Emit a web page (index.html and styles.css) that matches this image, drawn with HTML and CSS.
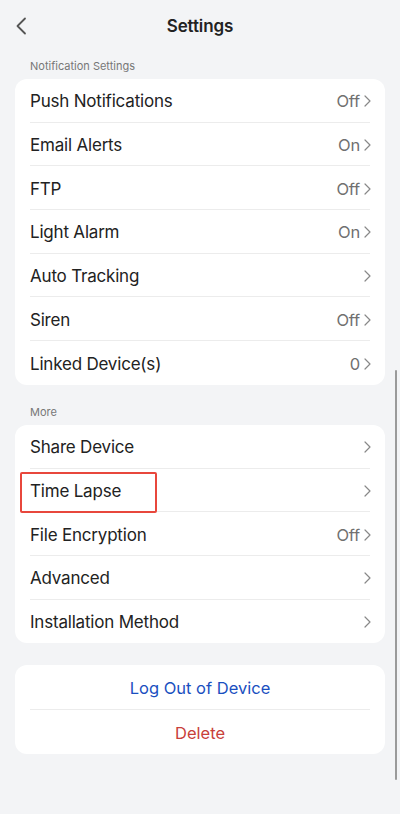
FILE: index.html
```html
<!DOCTYPE html>
<html>
<head>
<meta charset="utf-8">
<link rel="stylesheet" href="styles.css">
</head>
<body>
<div class="page">
  <header class="topbar">
    <svg class="back" width="12" height="18" viewBox="0 0 12 18"><path d="M10 1.5 L2.5 9 L10 16.5" fill="none" stroke="#555" stroke-width="1.8" stroke-linecap="round" stroke-linejoin="round"/></svg>
    <h1 class="title">Settings</h1>
  </header>

  <div class="section-label">Notification Settings</div>
  <div class="card">
    <div class="row"><span class="label">Push Notifications</span><span class="value">Off</span><svg class="chev" viewBox="0 0 7 12"><path d="M1 1 L6 6 L1 11"/></svg></div>
    <div class="row"><span class="label">Email Alerts</span><span class="value">On</span><svg class="chev" viewBox="0 0 7 12"><path d="M1 1 L6 6 L1 11"/></svg></div>
    <div class="row"><span class="label">FTP</span><span class="value">Off</span><svg class="chev" viewBox="0 0 7 12"><path d="M1 1 L6 6 L1 11"/></svg></div>
    <div class="row"><span class="label">Light Alarm</span><span class="value">On</span><svg class="chev" viewBox="0 0 7 12"><path d="M1 1 L6 6 L1 11"/></svg></div>
    <div class="row"><span class="label">Auto Tracking</span><span class="value"></span><svg class="chev" viewBox="0 0 7 12"><path d="M1 1 L6 6 L1 11"/></svg></div>
    <div class="row"><span class="label">Siren</span><span class="value">Off</span><svg class="chev" viewBox="0 0 7 12"><path d="M1 1 L6 6 L1 11"/></svg></div>
    <div class="row"><span class="label">Linked Device(s)</span><span class="value">0</span><svg class="chev" viewBox="0 0 7 12"><path d="M1 1 L6 6 L1 11"/></svg></div>
  </div>

  <div class="section-label more">More</div>
  <div class="card">
    <div class="row"><span class="label">Share Device</span><span class="value"></span><svg class="chev" viewBox="0 0 7 12"><path d="M1 1 L6 6 L1 11"/></svg></div>
    <div class="row"><span class="label">Time Lapse</span><span class="value"></span><svg class="chev" viewBox="0 0 7 12"><path d="M1 1 L6 6 L1 11"/></svg><span class="highlight"></span></div>
    <div class="row"><span class="label">File Encryption</span><span class="value">Off</span><svg class="chev" viewBox="0 0 7 12"><path d="M1 1 L6 6 L1 11"/></svg></div>
    <div class="row"><span class="label">Advanced</span><span class="value"></span><svg class="chev" viewBox="0 0 7 12"><path d="M1 1 L6 6 L1 11"/></svg></div>
    <div class="row"><span class="label">Installation Method</span><span class="value"></span><svg class="chev" viewBox="0 0 7 12"><path d="M1 1 L6 6 L1 11"/></svg></div>
  </div>

  <div class="card actions">
    <div class="row action logout">Log Out of Device</div>
    <div class="row action delete">Delete</div>
  </div>

  <div class="scrollbar"></div>
</div>
</body>
</html>
```

FILE: styles.css
```css
* { box-sizing: border-box; }
html, body {
  margin: 0;
  padding: 0;
  background: #f3f4f6;
  height: 814px;
  overflow: hidden;
}
body {
  font-family: Inter, "Liberation Sans", sans-serif;
  color: #222;
}
.page {
  position: relative;
  height: 814px;
  padding: 0 15px;
}
.topbar {
  position: relative;
  height: 52px;
  display: flex;
  align-items: center;
  justify-content: center;
}
.back {
  position: absolute;
  left: 0;
  top: 17px;
  width: 12px;
  height: 18px;
}
.title {
  margin: 0;
  font-size: 17px;
  font-weight: 600;
  color: #222;
  letter-spacing: -0.1px;
}
.section-label {
  font-size: 11px;
  color: #777;
  padding-left: 15px;
  height: 27px;
  line-height: 28px;
}
.section-label.more {
  margin-top: 13px;
  height: 27px;
}
.card {
  background: #fff;
  border-radius: 12px;
  padding: 0 15px;
}
.row {
  position: relative;
  height: 43.7px;
  padding-top: 2px;
  display: flex;
  align-items: center;
  font-size: 17px;
  border-bottom: 1px solid #ececec;
}
.row:last-child { border-bottom: none; }
.label {
  flex: 1;
  color: #222;
  letter-spacing: -0.2px;
}
.value {
  color: #707070;
  font-size: 16.5px;
  margin-right: 4px;
  letter-spacing: -0.2px;
}
.chev {
  width: 7px;
  height: 12px;
  fill: none;
  stroke: #888;
  stroke-width: 1.2;
  stroke-linecap: round;
  stroke-linejoin: round;
  margin-right: -1px;
}
.highlight {
  position: absolute;
  left: -10px;
  top: 3px;
  width: 137px;
  height: 41px;
  border: 2.5px solid #e8473c;
  border-radius: 2px;
}
.actions {
  margin-top: 22px;
}
.action {
  justify-content: center;
  height: 44.5px;
  font-size: 16.5px;
}
.logout { color: #1a4fc0; }
.delete { color: #c8403a; }
.scrollbar {
  position: absolute;
  right: 3px;
  top: 370px;
  width: 2px;
  height: 410px;
  background: #9a9a9a;
  border-radius: 1px;
}
```
